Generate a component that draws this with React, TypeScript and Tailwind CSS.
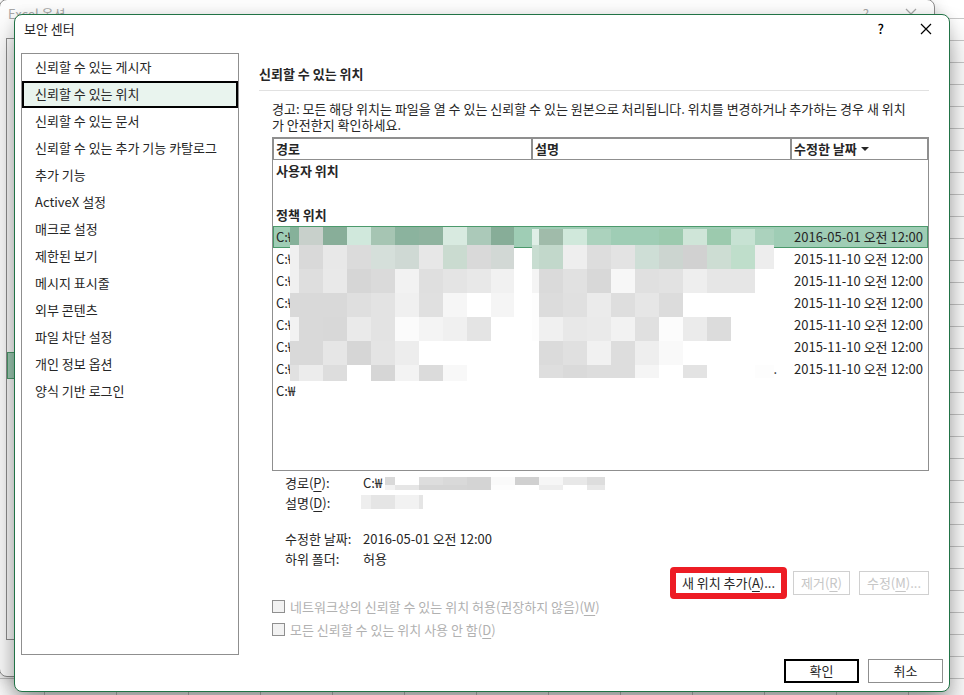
import React from "react";

const categories = [
  "신뢰할 수 있는 게시자",
  "신뢰할 수 있는 위치",
  "신뢰할 수 있는 문서",
  "신뢰할 수 있는 추가 기능 카탈로그",
  "추가 기능",
  "ActiveX 설정",
  "매크로 설정",
  "제한된 보기",
  "메시지 표시줄",
  "외부 콘텐츠",
  "파일 차단 설정",
  "개인 정보 옵션",
  "양식 기반 로그인",
];

const rows = [
  { path: "C:₩", date: "2016-05-01 오전 12:00" },
  { path: "C:₩", date: "2015-11-10 오전 12:00" },
  { path: "C:₩", date: "2015-11-10 오전 12:00" },
  { path: "C:₩", date: "2015-11-10 오전 12:00" },
  { path: "C:₩", date: "2015-11-10 오전 12:00" },
  { path: "C:₩", date: "2015-11-10 오전 12:00" },
  { path: "C:₩", date: "2015-11-10 오전 12:00" },
  { path: "C:₩", date: "" },
];

type MosaicProps = {
  xs: number[];
  ys: number[];
  cells: string[][];
  className?: string;
};

/* Censoring blocks: one rect for each cell of an uneven grid. */
function Mosaic({ xs, ys, cells, className }: MosaicProps) {
  const w = xs[xs.length - 1];
  const h = ys[ys.length - 1];
  return (
    <svg width={w} height={h} viewBox={`0 0 ${w} ${h}`} shapeRendering="crispEdges" aria-hidden="true" className={className}>
      {cells.map((line, r) =>
        line.map((fill, c) => (
          <rect key={`${r}-${c}`} x={xs[c]} y={ys[r]} width={xs[c + 1] - xs[c]} height={ys[r + 1] - ys[r]} fill={fill} />
        )),
      )}
    </svg>
  );
}

const pathCells = [
  ["#86b19a", "#c8d0cb", "#88ae99", "#d0e8dc", "#a6c5b3", "#8bb39e", "#8fb39f", "#d8eae0", "#abc9b9", "#87ad98"],
  ["#f0f0f0", "#d9d9d9", "#e8e8e8", "#dbdbdb", "#d5dfda", "#cfd9d4", "#e7e7e7", "#cadbd0", "#d9d9d9", "#d2d8d5"],
  ["#f0f0f0", "#dedede", "#e9e9e9", "#d6d6d6", "#dadada", "#f2f2f2", "#dfdfdf", "#e4e4e4", "#e8e8e8", "#f1f1f1"],
  ["#d9d9d9", "#d9d9d9", "#d9d9d9", "#dfdfdf", "#e3e3e3", "#f0f0f0", "#e0e0e0", "#f6f6f6", "#ffffff", "#f5f5f5"],
  ["#f2f2f2", "#d9d9d9", "#d8d8d8", "#eaeaea", "#e3e3e3", "#fbfbfb", "#f4f4f4", "#f0f0f0", "#e4e4e4", "#ffffff"],
  ["#d9d9d9", "#d9d9d9", "#e6e6e6", "#d6d6d6", "#e4e4e4", "#ededed", "#ffffff", "#ffffff", "#ffffff", "#ffffff"],
  ["#e1e1e1", "#ececec", "#dddddd", "#ffffff", "#d6d6d6", "#f3f3f3", "#dbdbdb", "#f8f8f8", "#ffffff", "#ffffff"],
];

const descriptionCells = [
  ["#dfeee6", "#a0bbaa", "#d0e8db", "#abd2bd", "#9fcdb5", "#9fcdb5", "#9ccaae", "#cfe5d8", "#9ccaae", "#c7e2d3", "#abd2bd"],
  ["#c8ddd1", "#c2d8cb", "#eeeeee", "#dddddd", "#e3e3e3", "#ceded6", "#ccd5d0", "#d1d1d1", "#cdddd3", "#bfdecb", "#ededed"],
  ["#f4f4f4", "#dadada", "#e1e1e1", "#d8d8d8", "#f7f7f7", "#e0e0e0", "#e2e2e2", "#eeeeee", "#e6e6e6", "#e6e6e6", "#ffffff"],
  ["#fdfdfd", "#dcdcdc", "#e0e0e0", "#ebebeb", "#dedede", "#e6e6e6", "#dcdcdc", "#ffffff", "#ffffff", "#ffffff", "#ffffff"],
  ["#fdfdfd", "#f0f0f0", "#e8e8e8", "#eaeaea", "#f2f2f2", "#e0e0e0", "#fcfcfc", "#ebebeb", "#dcdcdc", "#ffffff", "#ffffff"],
  ["#ffffff", "#dbdbdb", "#e0e0e0", "#f1f1f1", "#dddddd", "#eeeeee", "#f9f9f9", "#ffffff", "#ffffff", "#ffffff", "#ffffff"],
  ["#ffffff", "#dedede", "#dadada", "#dddddd", "#dddddd", "#f5f5f5", "#ffffff", "#e3e3e3", "#ffffff", "#ffffff", "#fdfdfd"],
];

function CloseIcon() {
  return (
    <svg width="12" height="12" viewBox="0 0 12 12" fill="none" stroke="currentColor" strokeWidth="1.2" aria-hidden="true">
      <path d="M1 1 11 11M11 1 1 11" />
    </svg>
  );
}

function Key({ children }: { children: React.ReactNode }) {
  return <span>(<u className="underline-offset-3">{children}</u>)</span>;
}

function BackgroundWindows() {
  return (
    <div aria-hidden="true" className="absolute inset-0 overflow-hidden bg-white">
      <div className="absolute inset-x-0 top-[18px] bottom-0 bg-[repeating-linear-gradient(to_bottom,#c8c8c8_0_1px,transparent_1px_22px)]" />
      <div className="absolute inset-x-0 bottom-0 h-4 bg-[repeating-linear-gradient(to_right,transparent_0_44px,#c8c8c8_44px_45px,transparent_45px_72px)]" />
      <div className="absolute top-[-1px] right-[29px] bottom-[18px] left-[-1px] rounded-lg border border-[#8a8a8a] bg-[#fcfcfc] shadow-[0_4px_16px_rgba(0,0,0,0.2)]">
        <div className="flex h-7 items-center justify-between pr-[17px] pl-2 text-[#a8a8a8]">
          <span>Excel 옵션</span>
          <span className="flex items-center gap-9">
            <span>?</span>
            <CloseIcon />
          </span>
        </div>
        <div className="mt-[10px] ml-1.5 h-[602px] w-56 border border-[#8f8f8f] pt-[313px]">
          <div className="h-[27px] border border-[#4c9a6c] bg-[#9fcdb5]" />
        </div>
      </div>
    </div>
  );
}

export default function App() {
  return (
    <div className="relative min-h-screen overflow-hidden px-3.5 pt-3.5 pb-[3px] font-['Noto_Sans_CJK_KR',sans-serif] text-[13px] leading-4 text-[#262626]">
      <BackgroundWindows />
      <main className="relative rounded-lg border border-[#217346] bg-white shadow-[0_20px_28px_rgba(0,0,0,0.36),0_0_12px_rgba(0,0,0,0.1)]">
        <header className="flex h-7 items-center justify-between pr-[17px] pl-[9px]">
          <h1>보안 센터</h1>
          <div className="flex items-center gap-9 text-black">
            <button type="button" aria-label="도움말" className="font-medium">?</button>
            <button type="button" aria-label="닫기"><CloseIcon /></button>
          </div>
        </header>

        <div className="flex pt-2.5 pr-5 pl-1.5">
          <nav className="w-[218px] shrink-0 border border-[#8f8f8f]">
            <ul>
              {categories.map((name, i) => (
                <li key={name}>
                  <button
                    type="button"
                    className={
                      i === 1
                        ? "block h-[27px] w-full border-2 border-black bg-[#e9f4ee] px-[11px] pb-0.5 text-left"
                        : "block h-[27px] w-full px-[13px] pb-0.5 text-left"
                    }
                  >
                    {name}
                  </button>
                </li>
              ))}
            </ul>
          </nav>

          <section className="ml-5 min-w-0 flex-1 pb-3.5">
            <h2 className="h-[38px] border-b border-[#e1e1e1] pt-[13px] font-bold">신뢰할 수 있는 위치</h2>
            <div className="pl-[13px]">
              <p className="mt-2.5">
                경고: 모든 해당 위치는 파일을 열 수 있는 신뢰할 수 있는 원본으로 처리됩니다. 위치를 변경하거나 추가하는 경우 새 위치
                <br />가 안전한지 확인하세요.
              </p>

              <div className="relative mt-1 border border-[#8f8f8f] pb-[68px]">
                <table className="w-full table-fixed border-separate border-spacing-0 text-left">
                  <thead>
                    <tr className="h-[22px]">
                      <th className="w-[259px] border border-[#8f8f8f] px-0.5 py-0 font-bold">경로</th>
                      <th className="w-[259px] border border-[#8f8f8f] px-0.5 py-0 font-bold">설명</th>
                      <th className="border border-[#8f8f8f] px-0.5 py-0 font-bold">
                        <span className="flex items-center gap-1">
                          수정한 날짜
                          <svg width="8" height="4" viewBox="0 0 8 4" aria-hidden="true"><path d="M0 0h8L4 4z" fill="#262626" /></svg>
                        </span>
                      </th>
                    </tr>
                  </thead>
                  <tbody>
                    <tr className="h-[22px]"><th colSpan={3} className="px-[3px] py-0 font-bold">사용자 위치</th></tr>
                    <tr className="h-[22px]"><td colSpan={3} className="p-0" /></tr>
                    <tr className="h-[22px]"><th colSpan={3} className="px-[3px] py-0 font-bold">정책 위치</th></tr>
                    {rows.map((row, i) => (
                      <tr key={i} className={i === 0 ? "h-[22px] bg-[#9fcdb5] outline outline-[#4c9a6c] -outline-offset-1" : "h-[22px]"}>
                        <td className="px-[3px] py-0">{row.path}</td>
                        <td className="p-0 pr-3.5 text-right">{i === 6 ? "." : ""}</td>
                        <td className="px-[3px] py-0 whitespace-nowrap">{row.date}</td>
                      </tr>
                    ))}
                  </tbody>
                </table>
                <Mosaic
                  className="absolute top-[89px] left-[17px]"
                  xs={[0, 9, 33, 57, 81, 105, 129, 153, 177, 201, 224]}
                  ys={[0, 18, 42, 66, 90, 114, 138, 154]}
                  cells={pathCells}
                />
                <Mosaic
                  className="absolute top-[91px] left-[259px]"
                  xs={[0, 7, 31, 55, 79, 103, 127, 151, 175, 199, 223, 242]}
                  ys={[0, 16, 40, 64, 88, 112, 136, 149]}
                  cells={descriptionCells}
                />
              </div>

              <dl className="mt-0.5 grid grid-cols-[78px_1fr] pl-[13px] leading-5">
                <dt>경로<Key>P</Key>:</dt>
                <dd className="relative">
                  C:₩
                  <Mosaic
                    className="absolute top-1 left-[22px]"
                    xs={[0, 10, 34, 58, 82, 106, 130, 154, 178, 202, 220]}
                    ys={[0, 8, 13]}
                    cells={[
                      ["#d9d9d9", "#ffffff", "#dddddd", "#d9d9d9", "#d4d4d4", "#fafafa", "#d0d0d0", "#f6f6f6", "#e8e8e8", "#dddddd"],
                      ["#f2f2f2", "#e6e6e6", "#d5d5d5", "#d5d5d5", "#d4d4d4", "#fdfdfd", "#ffffff", "#eeeeee", "#ffffff", "#e8e8e8"],
                    ]}
                  />
                </dd>
                <dt>설명<Key>D</Key>:</dt>
                <dd className="relative">
                  <Mosaic
                    className="absolute top-0.5 -left-0.5"
                    xs={[0, 10, 34, 58, 62]}
                    ys={[0, 14]}
                    cells={[["#eeeeee", "#e5e5e5", "#f2f2f2", "#e5e5e5"]]}
                  />
                </dd>
                <dt className="mt-4">수정한 날짜:</dt>
                <dd className="mt-4">2016-05-01 오전 12:00</dd>
                <dt>하위 폴더:</dt>
                <dd>허용</dd>
              </dl>

              <div className="mt-0.5 flex h-6 justify-end gap-[9px]">
                <div className="relative w-[111px]">
                  <button type="button" className="h-6 w-full whitespace-nowrap">새 위치 추가<Key>A</Key>...</button>
                  <span className="pointer-events-none absolute -inset-x-[3px] -inset-y-1 rounded-sm border-6 border-[#ed1c24]" />
                </div>
                <button type="button" disabled className="w-[57px] border border-[#d0d0d0] text-[#c6c6c6]">제거<Key>R</Key></button>
                <button type="button" disabled className="w-[70px] border border-[#d0d0d0] text-[#c6c6c6]">수정<Key>M</Key>...</button>
              </div>

              <label className="flex h-[23px] items-center gap-[5px] text-[#b1b1b1]">
                <input type="checkbox" disabled className="size-[13px] appearance-none border border-[#8f8f8f] bg-[#f2f2f2]" />
                <span>네트워크상의 신뢰할 수 있는 위치 허용(권장하지 않음)<Key>W</Key></span>
              </label>
              <label className="flex h-[23px] items-center gap-[5px] text-[#b1b1b1]">
                <input type="checkbox" disabled className="size-[13px] appearance-none border border-[#8f8f8f] bg-[#f2f2f2]" />
                <span>모든 신뢰할 수 있는 위치 사용 안 함<Key>D</Key></span>
              </label>
            </div>
          </section>
        </div>

        <footer className="mt-1 flex justify-end gap-[9px] pr-1.5 pb-2">
          <button type="button" className="h-6 w-[75px] border-2 border-black">확인</button>
          <button type="button" className="h-6 w-[75px] border border-[#8f8f8f]">취소</button>
        </footer>
      </main>
    </div>
  );
}
